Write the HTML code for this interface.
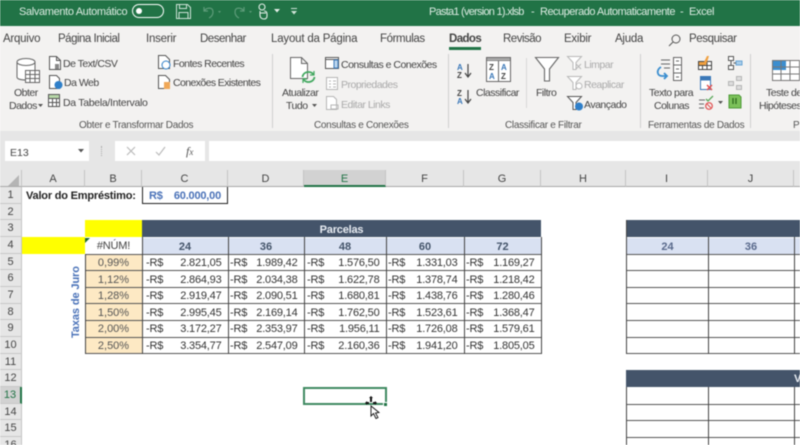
<!DOCTYPE html>
<html><head><meta charset="utf-8">
<style>
html,body{margin:0;padding:0;background:#fff}
#r{position:relative;width:800px;height:445px;overflow:hidden;background:#fff;font-family:"Liberation Sans",sans-serif;filter:blur(.45px)}
#r div{position:absolute;white-space:nowrap;box-sizing:border-box}
#r svg{position:absolute;overflow:visible}
.s{font-size:10.5px;color:#444;line-height:14px;letter-spacing:-.5px;margin-top:.5px}
.g{color:#aaa}
.tab{font-size:11.5px;color:#444;top:32px;line-height:15px;letter-spacing:-.25px}
.gl{font-size:10px;color:#555;top:118.500px;line-height:13px;letter-spacing:-.3px}
.sep{width:1px;top:54px;height:74px;background:#cfcfcf}
.ch{top:170px;height:17px;line-height:18px;text-align:center;font-size:11px;color:#444;background:#e6e6e6;border-right:1px solid #c4c4c4;border-bottom:1px solid #a8a8a8}
.rh{left:0;width:22px;text-align:center;font-size:11px;color:#444;background:#e6e6e6;border-right:1px solid #c4c4c4;border-bottom:1px solid #c8c8c8;line-height:17.500px;height:16.700px}
.c{font-family:"Liberation Sans",sans-serif;font-size:11px;color:#333;height:16.700px;line-height:19px;font-weight:400;letter-spacing:-.2px}
.hl{height:1px;background:#555}
.vl{width:1px;background:#444}
.n{text-align:right;padding-right:6.500px}
.hd{font-weight:700;color:#44546a;text-align:center;background:#d9e1f2;top:237.500px;height:16.500px;line-height:19px;font-size:11px}
.pc{left:85px;width:57px;background:#fde9c4;text-align:center;color:#555;font-size:11px;height:16.700px;line-height:19px}
.ti{font-size:11px;line-height:14px;color:#dcebe2;top:4.500px;letter-spacing:-.35px}
</style></head><body><div id="r">

<!-- title bar -->
<div style="left:0;top:0;width:800px;height:26px;background:#217346"></div>
<div class="ti" style="left:19px">Salvamento Automático</div>
<div style="left:132px;top:4px;width:32px;height:14px;border:1.200px solid #fff;border-radius:8px"></div>
<div style="left:136px;top:8px;width:6px;height:6px;border-radius:50%;background:#fff"></div>
<svg style="left:176px;top:4px" width="15" height="15" fill="none" stroke="#cfe3d7" stroke-width="1"><path d="M.5.5h11l3 3v11H.5zM3.500.5v4h7v-4M3 14.500v-6h9v6"/></svg>
<svg style="left:202px;top:4px" width="50" height="15" fill="none" stroke="#5d9b79" stroke-width="1.200"><path d="M2 3v4h4M2 7c3-4 9-4 9 1 0 3-2 5-4 6"/><path d="M16 7h3l-1.500 2z" fill="#5d9b79" stroke="none"/><path d="M42 3v4h-4M42 7c-3-4-9-4-9 1 0 3 2 5 4 6"/><path d="M47 7h3l-1.500 2z" fill="#5d9b79" stroke="none"/></svg>
<svg style="left:256px;top:3px" width="14" height="17" fill="none" stroke="#e6efe9" stroke-width="1.100"><circle cx="6" cy="4" r="3"/><path d="M4 8v3M8 8c3 0 3 2 3 3v2c0 2-1 3-3 3s-4-1-4-4v-2h6"/></svg>
<svg style="left:274px;top:9px" width="6" height="4"><path d="M0 0h6L3 3.500z" fill="#e6efe9"/></svg>
<svg style="left:291px;top:8px" width="6" height="7"><path d="M0 0h6v1H0zM0 3h6L3 6.500z" fill="#cfe3d7"/></svg>
<div class="ti" style="left:429px;letter-spacing:-.75px">Pasta1 (version 1).xlsb</div>
<div class="ti" style="left:531px">-</div>
<div class="ti" style="left:540px;letter-spacing:-.5px">Recuperado Automaticamente</div>
<div class="ti" style="left:680px">-</div>
<div class="ti" style="left:689px">Excel</div>

<!-- tabs + ribbon -->
<div style="left:0;top:26px;width:800px;height:105px;background:#f3f2f1"></div>
<div class="tab" style="left:3px">Arquivo</div>
<div class="tab" style="left:58px;letter-spacing:-.5px">Página Inicial</div>
<div class="tab" style="left:146px">Inserir</div>
<div class="tab" style="left:200px;letter-spacing:-.5px">Desenhar</div>
<div class="tab" style="left:271px;letter-spacing:-.2px">Layout da Página</div>
<div class="tab" style="left:380px;letter-spacing:-.4px">Fórmulas</div>
<div class="tab" style="left:449px;font-weight:700;color:#444;letter-spacing:-.6px">Dados</div>
<div style="left:449px;top:47px;width:32px;height:2.500px;background:#217346"></div>
<div class="tab" style="left:503px;letter-spacing:-.5px">Revisão</div>
<div class="tab" style="left:564px">Exibir</div>
<div class="tab" style="left:615px">Ajuda</div>
<svg style="left:668px;top:34px" width="13" height="13" fill="none" stroke="#555" stroke-width="1"><circle cx="8" cy="5" r="4"/><path d="M5 8l-4 4"/></svg>
<div class="tab" style="left:689px;letter-spacing:-.4px">Pesquisar</div>

<!-- Obter group -->
<svg style="left:16px;top:57px" width="24" height="26" fill="#fff" stroke="#666" stroke-width="1"><path d="M1 5v15c0 2 4 3 9 3s9-1 9-3V5"/><ellipse cx="10" cy="5" rx="9" ry="3.500"/></svg>
<svg style="left:25px;top:70px" width="15" height="13" fill="#fff" stroke="#666"><path d="M.5.5h14v12H.5zM.5 4.500h14M.5 8.500h14M5 .5v12M10 .5v12"/></svg>
<div class="s" style="left:14px;top:85px">Obter</div>
<div class="s" style="left:9px;top:98px">Dados</div>
<svg style="left:38px;top:104px" width="5" height="3"><path d="M0 0h5L2.500 3z" fill="#555"/></svg>
<svg style="left:49px;top:56px" width="12" height="14" fill="#fff" stroke="#555"><path d="M.5.5h7l4 4v9H.5zM7.500.5v4h4"/><path d="M6 8h4v5H6z" fill="#888" stroke="none"/></svg>
<div class="s" style="left:63px;top:56px">De Text/CSV</div>
<svg style="left:49px;top:75px" width="14" height="15" fill="#fff" stroke="#555"><path d="M.5.5h7l3 3v10H.5z"/><circle cx="9.500" cy="10" r="4" fill="#2f7fc9" stroke="none"/></svg>
<div class="s" style="left:64px;top:75px">Da Web</div>
<svg style="left:48px;top:94px" width="12" height="13" fill="#fff" stroke="#555"><path d="M.5.5h11v12H.5zM.5 4.500h11M.5 8.500h11M4.500.5v12M8.500.5v12"/><path d="M1 1h10v3H1z" fill="#b7d7a8" stroke="none"/></svg>
<div class="s" style="left:63px;top:95px;letter-spacing:-.3px">Da Tabela/Intervalo</div>
<svg style="left:158px;top:55px" width="13" height="15" fill="#fff" stroke="#555"><path d="M.5.5h7l4 4v9H.5z"/><circle cx="8" cy="10" r="4" fill="#fff" stroke="#2f7fc9"/></svg>
<div class="s" style="left:173px;top:56px;letter-spacing:-.55px">Fontes Recentes</div>
<svg style="left:158px;top:75px" width="13" height="15" fill="#fff" stroke="#555"><path d="M.5.5h7l4 4v9H.5z"/><path d="M6 7h6v7H6z" fill="#f0a858" stroke="none"/></svg>
<div class="s" style="left:173px;top:75px;letter-spacing:-.6px">Conexões Existentes</div>
<div class="gl" style="left:79px">Obter e Transformar Dados</div>
<div class="sep" style="left:272px"></div>

<!-- Consultas -->
<svg style="left:290px;top:57px" width="24" height="26" fill="#fff" stroke="#666"><path d="M.5.5h11l6 6v15H.5zM11.500.5v6h6"/></svg>
<svg style="left:301px;top:70px" width="15" height="14" fill="none" stroke="#41a85f" stroke-width="1.800"><path d="M1.500 7a6 5.500 0 0 1 11-2.500M13.500 7a6 5.500 0 0 1-11 2.500"/><path d="M13 1v4H9M2 13V9h4" stroke-width="1.200"/></svg>
<div class="s" style="left:282px;top:85px">Atualizar</div>
<div class="s" style="left:286px;top:98px">Tudo</div>
<svg style="left:312px;top:104px" width="5" height="3"><path d="M0 0h5L2.500 3z" fill="#555"/></svg>
<svg style="left:325px;top:57px" width="14" height="12" fill="#fff" stroke="#555"><path d="M.5.5h13v11H.5zM.5 2.500h13"/><path d="M9 3h4v8H9z" fill="#bcd6ee" stroke="#3b78b8"/></svg>
<div class="s" style="left:341px;top:57px">Consultas e Conexões</div>
<svg style="left:326px;top:77px" width="12" height="13" fill="#fff" stroke="#b5b5b5"><path d="M.5.5h11v12H.5zM3 4h2M3 7h2M3 10h2M7 4h3M7 7h3M7 10h3"/></svg>
<div class="s g" style="left:341px;top:77px">Propriedades</div>
<svg style="left:326px;top:96px" width="13" height="14" fill="#fff" stroke="#b5b5b5"><path d="M.5.5h7l3 3v10H.5zM5 9h7v4H5z"/></svg>
<div class="s g" style="left:341px;top:97px">Editar Links</div>
<div class="gl" style="left:314px">Consultas e Conexões</div>
<div class="sep" style="left:448px"></div>

<!-- Classificar -->
<svg style="left:457px;top:63px" width="16" height="46" font-family="Liberation Sans" font-size="8" font-weight="700"><text x="0" y="7" fill="#3b78b8">A</text><text x="0" y="15" fill="#444">Z</text><path d="M11 1v12M8 10l3 4 3-4" fill="none" stroke="#444" stroke-width="1.200"/><text x="0" y="33" fill="#444">Z</text><text x="0" y="41" fill="#3b78b8">A</text><path d="M11 27v12M8 36l3 4 3-4" fill="none" stroke="#444" stroke-width="1.200"/></svg>
<svg style="left:486px;top:57px" width="25" height="25" fill="#fff" stroke="#666" font-family="Liberation Sans" font-size="8" font-weight="700"><path d="M.5.5h24v24H.5zM12.500 3.500v21M.5 3.500h24"/><path d="M1 1h23v2.500H1z" fill="#aaa" stroke="none"/><text x="3" y="13" fill="#444" stroke="none">Z</text><text x="15" y="13" fill="#3b78b8" stroke="none">A</text><text x="3" y="22" fill="#3b78b8" stroke="none">A</text><text x="15" y="22" fill="#444" stroke="none">Z</text></svg>
<div class="s" style="left:476px;top:85px">Classificar</div>
<div style="left:526px;top:58px;width:1px;height:50px;background:#d8d8d8"></div>
<svg style="left:535px;top:57px" width="25" height="25" fill="#fff" stroke="#666" stroke-width="1.100"><path d="M.5.500h23L14.500 12v12h-5V12z"/></svg>
<div class="s" style="left:536px;top:85px">Filtro</div>
<svg style="left:567px;top:56px" width="16" height="15" fill="#fff" stroke="#b8b8b8"><path d="M.5.500h14L9 6.500v7H6v-7z"/><path d="M9 8l5 5M14 8l-5 5"/></svg>
<div class="s g" style="left:584px;top:57px">Limpar</div>
<svg style="left:567px;top:76px" width="16" height="15" fill="#fff" stroke="#b8b8b8"><path d="M.5.500h14L9 6.500v7H6v-7z"/><circle cx="12" cy="10" r="3"/></svg>
<div class="s g" style="left:584px;top:77px">Reaplicar</div>
<svg style="left:567px;top:96px" width="17" height="15" fill="#fff" stroke="#555"><path d="M.5.500h14L9 6.500v7H6v-7z"/><circle cx="12" cy="10.500" r="4" fill="#2f7fc9" stroke="none"/></svg>
<div class="s" style="left:584px;top:97px">Avançado</div>
<div class="gl" style="left:505px">Classificar e Filtrar</div>
<div class="sep" style="left:640px"></div>

<!-- Ferramentas -->
<svg style="left:656px;top:57px" width="29" height="25" fill="none" stroke="#666"><path d="M5 3h9M5 7h9M8 11h6"/><path d="M17.500.5h8v23h-8zM17.500 8h8M17.500 16h8M20 4h3M20 12h3M20 20h3" fill="#fff"/><path d="M5 10c-5 3-4 9 1 9h5M8 16l3 3-3 3" stroke="#3b8ecf" stroke-width="1.800"/></svg>
<div class="s" style="left:649px;top:85px">Texto para</div>
<div class="s" style="left:654px;top:98px">Colunas</div>
<svg style="left:698px;top:56px" width="15" height="14" fill="#fff" stroke="#444"><path d="M.5 5.500h13v8H.5zM4.500 5.500v8M9 1v12.500M.5 9.500h13"/><path d="M1 6h5l3-6h2l-3 9H1z" fill="#f0a040" stroke="none"/></svg>
<svg style="left:700px;top:76px" width="14" height="15" fill="#fff" stroke="#3b78b8"><path d="M.5.500h10v13H.5zM.5 4h10"/><path d="M1 1h9v3H1z" fill="#3b78b8"/><path d="M7 9l5 5M12 9l-5 5" stroke="#e05050" stroke-width="1.500"/></svg>
<svg style="left:698px;top:95px" width="16" height="15" fill="none" stroke="#666"><path d="M1 5h6M1 9h5M1 13h5"/><path d="M8 4l2 2 5-5" stroke="#5aa85a" stroke-width="1.300"/><circle cx="11" cy="11" r="3.300" stroke="#e05050" stroke-width="1.200"/><path d="M9 9l4 4" stroke="#e05050"/></svg>
<svg style="left:718px;top:101px" width="5" height="3"><path d="M0 0h5L2.500 3z" fill="#555"/></svg>
<svg style="left:728px;top:56px" width="15" height="15" fill="#fff" stroke="#555"><path d="M.5.500h5v4h-5zM.5 9.500h5v4h-5zM3 4.500v5"/><path d="M8 5h6v4H8z" fill="#a9cdea" stroke="#6aa5d6"/><path d="M5.500 7H8"/></svg>
<svg style="left:728px;top:76px" width="15" height="14" fill="#ddd" stroke="#b5b5b5"><path d="M8.500.5h5v4h-5zM.5 5.500h5v4h-5zM8.500 9.500h5v4h-5z"/></svg>
<svg style="left:728px;top:94px" width="14" height="15"><path d="M1 1h10l2 2v11H1z" fill="#7cc15a" stroke="#4e9a38"/><path d="M5 4v6M8 4v6" stroke="#2e6b1f" stroke-width="1.300"/></svg>
<div class="gl" style="left:648px">Ferramentas de Dados</div>
<div class="sep" style="left:750px"></div>
<svg style="left:772px;top:60px" width="28" height="21"><path d="M0 0h14v10H0z" fill="#3b8ecf"/><path d="M14 0h14v21H14zM0 10h14v11H0z" fill="#fff"/><path d="M.5.500h27v20H.5zM.5 7h27M.5 14h27M9 .5v20M18 .5v20" fill="none" stroke="#777"/></svg>
<div class="s" style="left:766px;top:85px">Teste de</div>
<div class="s" style="left:759px;top:98px">Hipóteses</div>
<div class="gl" style="left:793px">Pr</div>

<!-- formula bar -->
<div style="left:0;top:131px;width:800px;height:39px;background:#e6e6e6"></div>
<div style="left:5px;top:141px;width:84px;height:20px;background:#fff"></div>
<div class="s" style="left:10px;top:145px;letter-spacing:0">E13</div>
<svg style="left:78px;top:149px" width="6" height="4"><path d="M0 0h6L3 3.500z" fill="#555"/></svg>
<div style="left:101px;top:146px;width:1px;height:10px;border-left:1px dotted #aaa"></div>
<div style="left:115px;top:141px;width:90px;height:20px;background:#fff"></div>
<svg style="left:126px;top:146px" width="60" height="11" fill="none" stroke="#bbb" stroke-width="1.200"><path d="M1 1l8 8M9 1l-8 8M30 6l3 3 6-8"/></svg>
<div style="left:186px;top:144px;font-family:'Liberation Serif',serif;font-style:italic;font-size:12px;color:#555">f<span style="font-size:9px">x</span></div>
<div style="left:209px;top:141px;width:591px;height:20px;background:#fff"></div>

<!-- column headers -->
<div class="ch" style="left:0;width:22px"></div>
<svg style="left:8px;top:175px" width="11" height="11"><path d="M11 0v11H0z" fill="#b5b5b5"/></svg>
<div class="ch" style="left:22px;width:63px">A</div>
<div class="ch" style="left:85px;width:57px">B</div>
<div class="ch" style="left:142px;width:86px">C</div>
<div class="ch" style="left:228px;width:76px">D</div>
<div class="ch" style="left:304px;width:82px;background:#d2d2d2;border-bottom:2px solid #217346;color:#217346">E</div>
<div class="ch" style="left:386px;width:78px">F</div>
<div class="ch" style="left:464px;width:77px">G</div>
<div class="ch" style="left:541px;width:85px">H</div>
<div class="ch" style="left:626px;width:82px">I</div>
<div class="ch" style="left:708px;width:86px">J</div>
<div class="ch" style="left:794px;width:6px;border-right:0"></div>

<!-- row headers -->
<div class="rh" style="top:187px">1</div>
<div class="rh" style="top:203.700px">2</div>
<div class="rh" style="top:220.400px">3</div>
<div class="rh" style="top:237px">4</div>
<div class="rh" style="top:253.700px">5</div>
<div class="rh" style="top:270.400px">6</div>
<div class="rh" style="top:287px">7</div>
<div class="rh" style="top:303.700px">8</div>
<div class="rh" style="top:320.400px">9</div>
<div class="rh" style="top:337px">10</div>
<div class="rh" style="top:353.700px">11</div>
<div class="rh" style="top:370.400px">12</div>
<div class="rh" style="top:387px;background:#d2d2d2;color:#217346;border-right:2px solid #217346">13</div>
<div class="rh" style="top:403.700px">14</div>
<div class="rh" style="top:420.400px">15</div>
<div class="rh" style="top:437px">16</div>

<!-- row 1 -->
<div class="c" style="left:26px;top:187px;font-weight:700;color:#222">Valor do Empréstimo:</div>
<div style="left:142px;top:187px;width:86px;height:17px;border:1.200px solid #222;border-top:0"></div>
<div class="c" style="left:149px;top:187px;font-weight:700;color:#4a72b8">R$</div>
<div class="c" style="left:142px;top:187px;width:79px;text-align:right;font-weight:700;color:#4a72b8">60.000,00</div>

<!-- yellow -->
<div style="left:85px;top:220px;width:57px;height:17px;background:#ffff00"></div>
<div style="left:22px;top:237px;width:63px;height:17px;background:#ffff00"></div>
<svg style="left:85px;top:238px" width="5" height="5"><path d="M0 0h5L0 5z" fill="#1d6b32"/></svg>
<div class="c" style="left:85px;top:237px;width:57px;text-align:center;color:#444">#NÚM!</div>

<!-- Taxas de Juro -->
<div style="left:41px;top:296px;width:70px;height:14px;line-height:14px;transform:rotate(-90deg);text-align:center;font-size:11px;font-weight:700;color:#4a72b8;letter-spacing:-.1px">Taxas de Juro</div>

<!-- parcelas table -->
<div style="left:142px;top:220px;width:399px;height:17px;background:#44546a"></div>
<div style="left:142px;top:221px;width:399px;text-align:center;font-size:11px;font-weight:700;color:#e8ecf2;line-height:18px;letter-spacing:-.2px">Parcelas</div>
<div class="hd" style="left:142px;width:86px">24</div>
<div class="hd" style="left:228px;width:76px">36</div>
<div class="hd" style="left:304px;width:82px">48</div>
<div class="hd" style="left:386px;width:78px">60</div>
<div class="hd" style="left:464px;width:77px">72</div>

<div class="pc" style="top:254px">0,99%</div>
<div class="pc" style="top:270.500px">1,12%</div>
<div class="pc" style="top:287px">1,28%</div>
<div class="pc" style="top:303.700px">1,50%</div>
<div class="pc" style="top:320.400px">2,00%</div>
<div class="pc" style="top:337px">2,50%</div>

<!-- money rows: C -->
<div class="c" style="left:146px;top:254px">-R$</div><div class="c n" style="left:142px;width:86px;top:254px">2.821,05</div>
<div class="c" style="left:146px;top:270.500px">-R$</div><div class="c n" style="left:142px;width:86px;top:270.500px">2.864,93</div>
<div class="c" style="left:146px;top:287px">-R$</div><div class="c n" style="left:142px;width:86px;top:287px">2.919,47</div>
<div class="c" style="left:146px;top:303.700px">-R$</div><div class="c n" style="left:142px;width:86px;top:303.700px">2.995,45</div>
<div class="c" style="left:146px;top:320.400px">-R$</div><div class="c n" style="left:142px;width:86px;top:320.400px">3.172,27</div>
<div class="c" style="left:146px;top:337px">-R$</div><div class="c n" style="left:142px;width:86px;top:337px">3.354,77</div>
<!-- D -->
<div class="c" style="left:230px;top:254px">-R$</div><div class="c n" style="left:228px;width:76px;top:254px">1.989,42</div>
<div class="c" style="left:230px;top:270.500px">-R$</div><div class="c n" style="left:228px;width:76px;top:270.500px">2.034,38</div>
<div class="c" style="left:230px;top:287px">-R$</div><div class="c n" style="left:228px;width:76px;top:287px">2.090,51</div>
<div class="c" style="left:230px;top:303.700px">-R$</div><div class="c n" style="left:228px;width:76px;top:303.700px">2.169,14</div>
<div class="c" style="left:230px;top:320.400px">-R$</div><div class="c n" style="left:228px;width:76px;top:320.400px">2.353,97</div>
<div class="c" style="left:230px;top:337px">-R$</div><div class="c n" style="left:228px;width:76px;top:337px">2.547,09</div>
<!-- E -->
<div class="c" style="left:307px;top:254px">-R$</div><div class="c n" style="left:304px;width:82px;top:254px">1.576,50</div>
<div class="c" style="left:307px;top:270.500px">-R$</div><div class="c n" style="left:304px;width:82px;top:270.500px">1.622,78</div>
<div class="c" style="left:307px;top:287px">-R$</div><div class="c n" style="left:304px;width:82px;top:287px">1.680,81</div>
<div class="c" style="left:307px;top:303.700px">-R$</div><div class="c n" style="left:304px;width:82px;top:303.700px">1.762,50</div>
<div class="c" style="left:307px;top:320.400px">-R$</div><div class="c n" style="left:304px;width:82px;top:320.400px">1.956,11</div>
<div class="c" style="left:307px;top:337px">-R$</div><div class="c n" style="left:304px;width:82px;top:337px">2.160,36</div>
<!-- F -->
<div class="c" style="left:388px;top:254px">-R$</div><div class="c n" style="left:386px;width:78px;top:254px">1.331,03</div>
<div class="c" style="left:388px;top:270.500px">-R$</div><div class="c n" style="left:386px;width:78px;top:270.500px">1.378,74</div>
<div class="c" style="left:388px;top:287px">-R$</div><div class="c n" style="left:386px;width:78px;top:287px">1.438,76</div>
<div class="c" style="left:388px;top:303.700px">-R$</div><div class="c n" style="left:386px;width:78px;top:303.700px">1.523,61</div>
<div class="c" style="left:388px;top:320.400px">-R$</div><div class="c n" style="left:386px;width:78px;top:320.400px">1.726,08</div>
<div class="c" style="left:388px;top:337px">-R$</div><div class="c n" style="left:386px;width:78px;top:337px">1.941,20</div>
<!-- G -->
<div class="c" style="left:466px;top:254px">-R$</div><div class="c n" style="left:464px;width:77px;top:254px">1.169,27</div>
<div class="c" style="left:466px;top:270.500px">-R$</div><div class="c n" style="left:464px;width:77px;top:270.500px">1.218,42</div>
<div class="c" style="left:466px;top:287px">-R$</div><div class="c n" style="left:464px;width:77px;top:287px">1.280,46</div>
<div class="c" style="left:466px;top:303.700px">-R$</div><div class="c n" style="left:464px;width:77px;top:303.700px">1.368,47</div>
<div class="c" style="left:466px;top:320.400px">-R$</div><div class="c n" style="left:464px;width:77px;top:320.400px">1.579,61</div>
<div class="c" style="left:466px;top:337px">-R$</div><div class="c n" style="left:464px;width:77px;top:337px">1.805,05</div>

<!-- left table lines -->
<div class="hl" style="left:85px;top:254px;width:456px"></div>
<div class="hl" style="left:85px;top:270px;width:456px"></div>
<div class="hl" style="left:85px;top:287px;width:456px"></div>
<div class="hl" style="left:85px;top:303px;width:456px"></div>
<div class="hl" style="left:85px;top:320px;width:456px"></div>
<div class="hl" style="left:85px;top:337px;width:456px"></div>
<div class="hl" style="left:85px;top:353px;width:456px"></div>
<div class="vl" style="left:85px;top:254px;height:100px"></div>
<div class="vl" style="left:142px;top:237px;height:117px"></div>
<div class="vl" style="left:228px;top:237px;height:117px"></div>
<div class="vl" style="left:304px;top:237px;height:117px"></div>
<div class="vl" style="left:386px;top:237px;height:117px"></div>
<div class="vl" style="left:464px;top:237px;height:117px"></div>
<div class="vl" style="left:541px;top:237px;height:117px"></div>

<!-- right table 1 -->
<div style="left:626px;top:220px;width:174px;height:17px;background:#44546a"></div>
<div class="hd" style="left:627px;width:81px;color:#5a6a8c">24</div>
<div class="hd" style="left:708px;width:86px;color:#5a6a8c">36</div>
<div class="hd" style="left:794px;width:6px"></div>
<div class="hl" style="left:626px;top:254px;width:174px"></div>
<div class="hl" style="left:626px;top:270px;width:174px"></div>
<div class="hl" style="left:626px;top:287px;width:174px"></div>
<div class="hl" style="left:626px;top:303px;width:174px"></div>
<div class="hl" style="left:626px;top:320px;width:174px"></div>
<div class="hl" style="left:626px;top:337px;width:174px"></div>
<div class="hl" style="left:626px;top:353px;width:174px"></div>
<div class="vl" style="left:626px;top:220px;height:134px"></div>
<div class="vl" style="left:708px;top:237px;height:117px"></div>
<div class="vl" style="left:794px;top:237px;height:117px"></div>

<!-- right table 2 -->
<div style="left:626px;top:370px;width:174px;height:17px;background:#44546a"></div>
<div style="left:794px;top:371px;font-size:11px;font-weight:700;color:#e8ecf2;line-height:17px">V</div>
<div class="hl" style="left:626px;top:404px;width:174px"></div>
<div class="hl" style="left:626px;top:420px;width:174px"></div>
<div class="hl" style="left:626px;top:437px;width:174px"></div>
<div class="vl" style="left:626px;top:387px;height:58px"></div>
<div class="vl" style="left:708px;top:387px;height:58px"></div>
<div class="vl" style="left:794px;top:387px;height:58px"></div>

<!-- selection -->
<div style="left:303px;top:386.500px;width:83.500px;height:18.500px;border:2px solid #3f8a62"></div>
<div style="left:383px;top:402px;width:5px;height:5px;background:#217346;border:1px solid #fff"></div>
<svg style="left:364px;top:396px" width="17" height="26"><path d="M7 0l2 2H8v4H6V2H5zM1 7l2-2v1h2v2H3v1zM9 6h2V5l2 2-2 2V8H9z" fill="#111"/><path d="M7 10v10l2.500-2.500 2.500 5 2-1-2.500-4.500 3.500-.5z" fill="#fff" stroke="#111" stroke-width=".9"/></svg>
</div></body></html>
